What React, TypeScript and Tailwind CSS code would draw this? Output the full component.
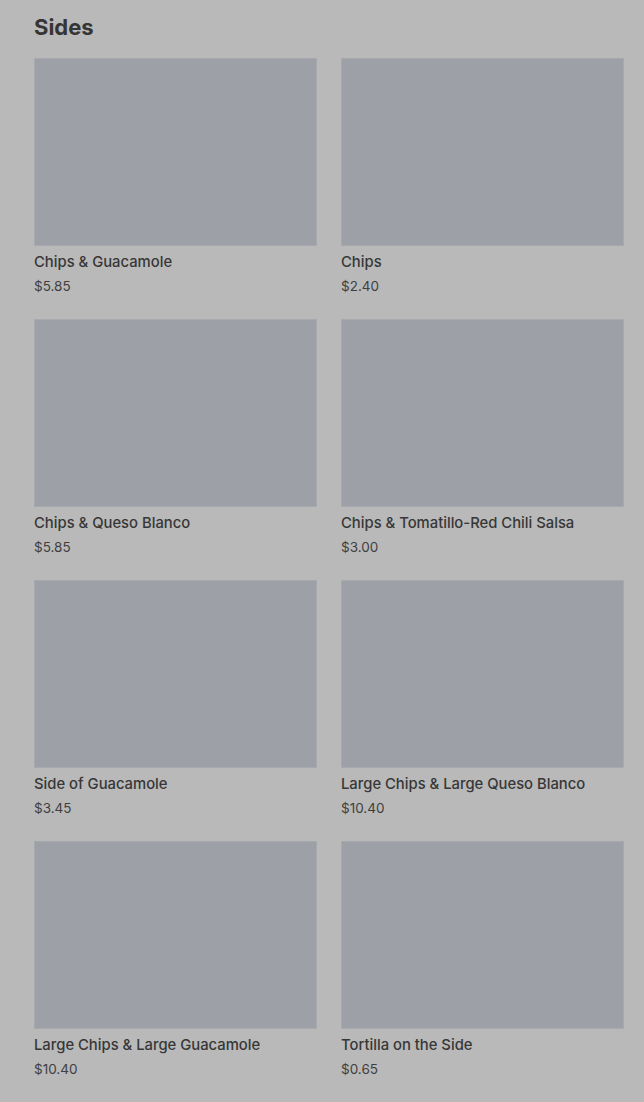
const items = [
  { name: "Chips & Guacamole", price: "$5.85" },
  { name: "Chips", price: "$2.40" },
  { name: "Chips & Queso Blanco", price: "$5.85" },
  { name: "Chips & Tomatillo-Red Chili Salsa", price: "$3.00" },
  { name: "Side of Guacamole", price: "$3.45" },
  { name: "Large Chips & Large Queso Blanco", price: "$10.40" },
  { name: "Large Chips & Large Guacamole", price: "$10.40" },
  { name: "Tortilla on the Side", price: "$0.65" },
];

export default function App() {
  return (
    <div
      className="min-h-[1102px] bg-[#b9b9b9] pl-[34px] pr-[20px] pt-[13px] text-[#333333]"
      style={{ fontFamily: "Inter, 'Liberation Sans', Arial, sans-serif" }}
    >
      <h2 className="text-[22px] font-bold leading-[28px] text-[#353535]">Sides</h2>
      <div className="mt-[17px] grid grid-cols-2 gap-x-[24px] gap-y-[23px]">
        {items.map((it) => (
          <div key={it.name}>
            <div className="h-[188px] w-full border border-[#a7a9ae] bg-[#9da0a7]" />
            <div className="mt-[6px] text-[14.8px] font-medium leading-5 text-[#373737]">{it.name}</div>
            <div className="mt-[4px] text-[13.5px] leading-5 text-[#3f3f3f]">{it.price}</div>
          </div>
        ))}
      </div>
    </div>
  );
}
